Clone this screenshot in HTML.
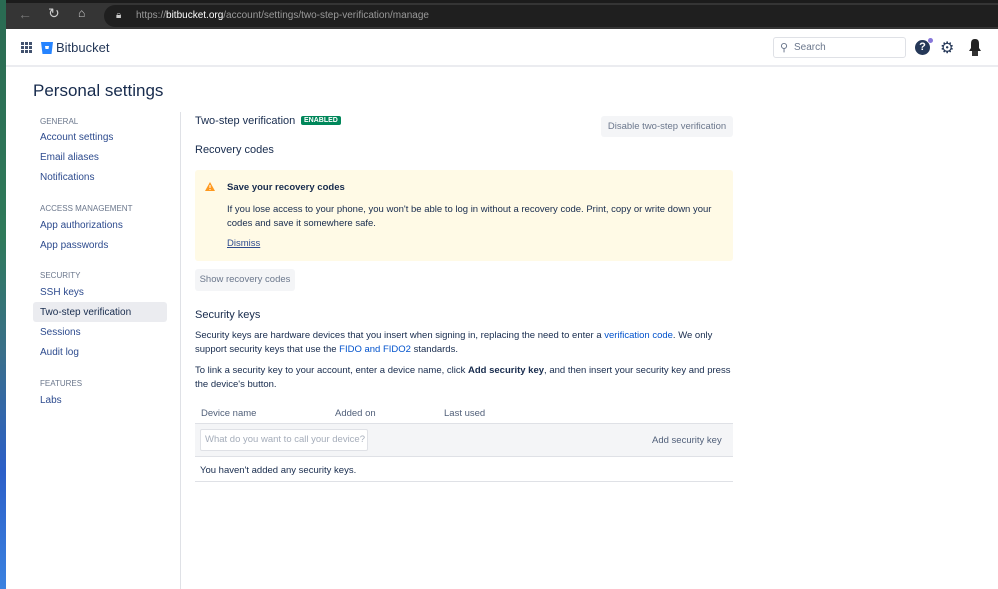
<!DOCTYPE html>
<html><head><meta charset="utf-8"><style>
*{box-sizing:border-box;margin:0;padding:0}
body{width:998px;height:589px;overflow:hidden;font-family:"Liberation Sans",sans-serif;background:#fff;position:relative;color:#172b4d}
.strip{position:absolute;left:0;top:0;width:6px;height:589px;background:linear-gradient(#2a6a52 0%,#2f7a5a 40%,#3a6f8a 60%,#2c5fc8 80%,#3b82e0 100%)}
.chrome{position:absolute;left:0;top:0;width:998px;height:29px;background:#353535;border-top:3px solid #1c1c1c}
.url{position:absolute;left:104px;top:2px;width:894px;height:22px;background:#1f1f1f;border-radius:11px 0 0 11px;color:#9a9a9a;font-size:10px;line-height:22px;padding-left:32px}
.url b{color:#fff;font-weight:normal}
.page{position:absolute;left:6px;top:29px;right:0;bottom:0;background:#fff}
.hdr{height:38px;border-bottom:2px solid #ebecf0;position:relative}
.t{position:absolute;font-size:11px;white-space:nowrap}
.main .t,.main p,.side .t{margin-top:1px}
.lbl{font-size:8px;color:#6b778c}
.lnk{color:#2d4b8e}
p{font-size:9.5px;line-height:14px;color:#172b4d}
</style></head><body>
<div class="chrome">
<span style="position:absolute;left:18px;top:3px;color:#777;font-size:14px">←</span>
<span style="position:absolute;left:48px;top:2px;color:#ccc;font-size:14px">↻</span>
<span style="position:absolute;left:78px;top:3px;color:#ccc;font-size:12px">⌂</span>
<div class="url"><span style="position:absolute;left:12px;top:0;color:#ccc">🔒︎</span>https://<b>bitbucket.org</b>/account/settings/two-step-verification/manage</div>
</div>
<div class="strip"></div>
<div class="page">
<div class="hdr">
<svg style="position:absolute;left:15px;top:13px" width="11" height="11"><g fill="#42526e"><rect x="0" y="0" width="3" height="3"/><rect x="4" y="0" width="3" height="3"/><rect x="8" y="0" width="3" height="3"/><rect x="0" y="4" width="3" height="3"/><rect x="4" y="4" width="3" height="3"/><rect x="8" y="4" width="3" height="3"/><rect x="0" y="8" width="3" height="3"/><rect x="4" y="8" width="3" height="3"/><rect x="8" y="8" width="3" height="3"/></g></svg>
<svg style="position:absolute;left:35px;top:13px" width="12" height="12" viewBox="0 0 12 12"><path d="M0 0H12L10.5 12H1.5Z" fill="#2684ff"/><path d="M4 4H8L7.5 7H4.5Z" fill="#fff"/></svg>
<div class="t" style="left:50px;top:11px;font-size:13px;color:#253858">Bitbucket</div>
<div style="position:absolute;left:767px;top:8px;width:133px;height:21px;border:1px solid #dfe1e6;border-radius:3px"><span class="t" style="left:6px;top:3px;color:#6b778c">⚲</span><span class="t" style="left:20px;top:4px;font-size:10px;color:#6b778c">Search</span></div>
<div style="position:absolute;left:909px;top:11px;width:15px;height:15px;border-radius:50%;background:#253858;color:#fff;font-size:11px;font-weight:bold;text-align:center;line-height:15px">?</div>
<div style="position:absolute;left:922px;top:9px;width:5px;height:5px;border-radius:50%;background:#8777d9"></div>
<div class="t" style="left:934px;top:9px;font-size:16px;color:#253858">⚙</div>
<svg style="position:absolute;left:963px;top:10px" width="12" height="17"><path d="M6 0C2 0 2 3 2 6V9L0 12H12L10 9V6C10 3 10 0 6 0Z" fill="#222"/><rect x="3" y="12" width="6" height="5" fill="#333"/></svg>
</div>
<div class="t" style="left:27px;top:52px;font-size:17px;color:#172b4d">Personal settings</div>
<div style="position:absolute;left:174px;top:83px;width:1px;height:477px;background:#dfe1e6"></div>
<div class="side">
<div class="t lbl" style="left:34px;top:87px">GENERAL</div>
<div class="t lnk" style="left:34px;top:102px;font-size:10px">Account settings</div>
<div class="t lnk" style="left:34px;top:122px;font-size:10px">Email aliases</div>
<div class="t lnk" style="left:34px;top:142px;font-size:10px">Notifications</div>
<div class="t lbl" style="left:34px;top:174px">ACCESS MANAGEMENT</div>
<div class="t lnk" style="left:34px;top:190px;font-size:10px">App authorizations</div>
<div class="t lnk" style="left:34px;top:210px;font-size:10px">App passwords</div>
<div class="t lbl" style="left:34px;top:241px">SECURITY</div>
<div class="t lnk" style="left:34px;top:257px;font-size:10px">SSH keys</div>
<div style="position:absolute;left:27px;top:273px;width:134px;height:20px;background:#ebecf0;border-radius:3px"></div>
<div class="t" style="left:34px;top:277px;font-size:10px;color:#172b4d">Two-step verification</div>
<div class="t lnk" style="left:34px;top:297px;font-size:10px">Sessions</div>
<div class="t lnk" style="left:34px;top:317px;font-size:10px">Audit log</div>
<div class="t lbl" style="left:34px;top:349px">FEATURES</div>
<div class="t lnk" style="left:34px;top:365px;font-size:10px">Labs</div>
</div>
<div class="main">
<div class="t" style="left:189px;top:85px;font-size:11px">Two-step verification</div>
<div class="t" style="left:295px;top:86px;background:#00875a;color:#fff;font-size:7px;font-weight:bold;padding:1px 3px;border-radius:2px">ENABLED</div>
<div style="position:absolute;left:595px;top:87px;width:132px;height:21px;background:#f4f5f7;border-radius:3px;color:#6b778c;font-size:9.5px;text-align:center;line-height:21px">Disable two-step verification</div>
<div class="t" style="left:189px;top:114px;font-size:11px">Recovery codes</div>
<div style="position:absolute;left:189px;top:141px;width:538px;height:91px;background:#fffae6;border-radius:3px">
<svg style="position:absolute;left:10px;top:12px" width="10" height="9"><path d="M5 0L10 9H0Z" fill="#ff991f"/><rect x="4.5" y="3" width="1" height="3" fill="#fff"/><rect x="4.5" y="7" width="1" height="1" fill="#fff"/></svg>
<div class="t" style="left:32px;top:11px;font-size:9.5px;font-weight:bold">Save your recovery codes</div>
<p style="position:absolute;left:32px;top:32px;width:500px">If you lose access to your phone, you won't be able to log in without a recovery code. Print, copy or write down your codes and save it somewhere safe.</p>
<div class="t" style="left:32px;top:67px;font-size:9.5px;color:#2d4b8e;text-decoration:underline">Dismiss</div>
</div>
<div style="position:absolute;left:189px;top:240px;width:100px;height:22px;background:#f4f5f7;border-radius:3px;color:#6b778c;font-size:9.5px;text-align:center;line-height:22px">Show recovery codes</div>
<div class="t" style="left:189px;top:279px;font-size:11px">Security keys</div>
<p style="position:absolute;left:189px;top:299px;width:545px">Security keys are hardware devices that you insert when signing in, replacing the need to enter a <span style="color:#0052cc">verification code</span>. We only support security keys that use the <span style="color:#0052cc">FIDO and FIDO2</span> standards.</p>
<p style="position:absolute;left:189px;top:334px;width:545px">To link a security key to your account, enter a device name, click <b>Add security key</b>, and then insert your security key and press the device's button.</p>
<div class="t" style="left:195px;top:378px;font-size:9.5px;color:#505f79">Device name</div>
<div class="t" style="left:329px;top:378px;font-size:9.5px;color:#505f79">Added on</div>
<div class="t" style="left:438px;top:378px;font-size:9.5px;color:#505f79">Last used</div>
<div style="position:absolute;left:189px;top:394px;width:538px;height:34px;background:#f4f5f7;border-top:1px solid #dfe1e6;border-bottom:1px solid #dfe1e6"></div>
<div style="position:absolute;left:194px;top:400px;width:168px;height:22px;background:#fff;border:1px solid #dfe1e6;border-radius:2px;color:#a5adba;font-size:9.5px;line-height:20px;padding-left:4px">What do you want to call your device?</div>
<div class="t" style="left:646px;top:405px;font-size:9.5px;color:#505f79">Add security key</div>
<div class="t" style="left:194px;top:435px;font-size:9.5px">You haven't added any security keys.</div>
<div style="position:absolute;left:189px;top:452px;width:538px;height:1px;background:#dfe1e6"></div>
</div>
</div>
</body></html>
